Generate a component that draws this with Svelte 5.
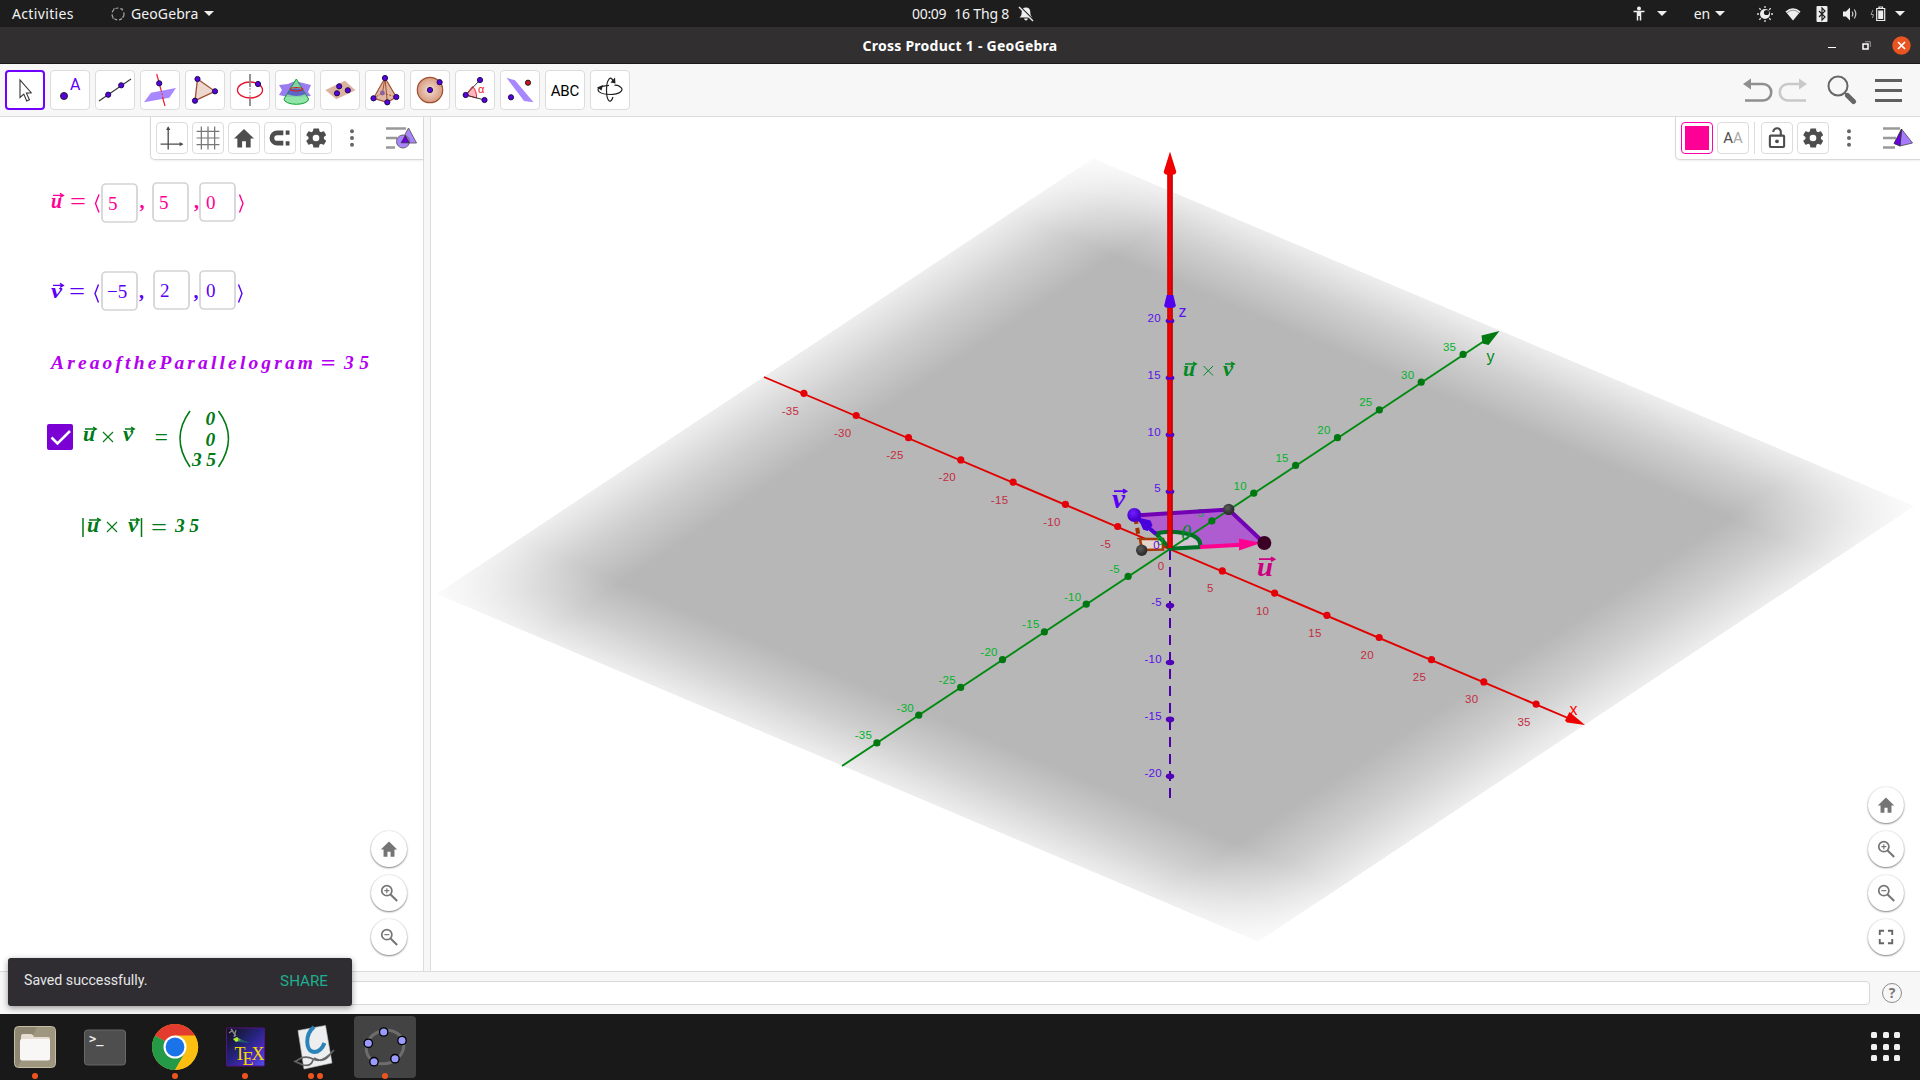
<script>
  // Screen projection of the 3D axes: origin and step for five units.
  const O = { x: 1170, y: 548.7 };
  const project = (x, y, z = 0) => ({
    x: O.x + (x * 52.3 + y * 41.87) / 5,
    y: O.y + (x * 22.2 - y * 27.75 - z * 56.9) / 5
  });
  const steps = [-35, -30, -25, -20, -15, -10, -5, 5, 10, 15, 20, 25, 30, 35];
  const zSteps = [-20, -15, -10, -5, 5, 10, 15, 20];
  const xTicks = steps.map((n) => ({ n, ...project(n, 0) }));
  const yTicks = steps.map((n) => ({ n, ...project(0, n) }));
  const zTicks = zSteps.map((n) => ({ n, ...project(0, 0, n) }));

  const tools = ['move', 'point', 'line', 'perp', 'polygon', 'circle', 'cone', 'plane', 'pyramid', 'sphere', 'angle', 'reflect', 'text', 'rotate'];
  const leftBar = ['axes', 'grid', 'home', 'magnet', 'gear'];
  const leftZoom = ['home', 'zoomin', 'zoomout'];
  const rightZoom = ['home', 'zoomin', 'zoomout', 'full'];
  const dock = [
    { id: 'files', dots: 1 },
    { id: 'terminal', dots: 0 },
    { id: 'chrome', dots: 1 },
    { id: 'tex', dots: 1 },
    { id: 'viewer', dots: 2 },
    { id: 'geogebra', dots: 1 }
  ];
  const fields = [
    { x: 101, y: 183, tx: 108, v: '5', c: 'pink' },
    { x: 152, y: 182, tx: 159, v: '5', c: 'pink' },
    { x: 199, y: 182, tx: 206, v: '0', c: 'pink' },
    { x: 101, y: 271, tx: 107, v: '−5', c: 'blue' },
    { x: 153, y: 270, tx: 160, v: '2', c: 'blue' },
    { x: 199, y: 270, tx: 206, v: '0', c: 'blue' }
  ];
</script>

{#snippet vec(x, y, ch, size, len)}
  <g>
    <text {x} {y} font-size={size} font-weight="bold" font-style="italic" textLength={len} lengthAdjust="spacingAndGlyphs">{ch}</text>
    <path d="M{x + 2} {y - size * 0.6}h{len - 1}m-3 -2l3.4 2l-3.4 2" fill="none" stroke="currentColor" stroke-width={size > 25 ? 1.8 : 1.3} />
  </g>
{/snippet}

{#snippet icon(id)}
  <svg class="ic" width="24" height="24" viewBox="0 0 24 24">
    {#if id === 'axes'}
      <g fill="none" stroke="#4d4d4d" stroke-width="1.4"><path d="M8 24V1M0 18.5H23" /></g>
      <path d="M8 -.5l2.3 4H5.700zM24 18.500l-4-2.300v4.600z" fill="#4d4d4d" />
    {:else if id === 'grid'}
      <path d="M5 0v24M12 0v24M19 0v24M0 5h24M0 12h24M0 19h24" stroke="#777" stroke-width="1.3" />
    {:else if id === 'home'}
      <path d="M12 2.500L1.500 12.500H5V22h5v-6.500h4V22h5v-9.500h3.500z" fill="currentColor" />
    {:else if id === 'magnet'}
      <path d="M15.500 6.500H9a5.500 5.500 0 0 0 0 11h6.500" fill="none" stroke="#4d4d4d" stroke-width="5" />
      <path d="M18 4h4v4.500h-4zM18 15.500h4V20h-4z" fill="#4d4d4d" />
    {:else if id === 'gear'}
      <path fill="#4d4d4d" fill-rule="evenodd" d="M20.300 13l.1-1-.1-1 2.100-1.700a.6.6 0 0 0 .1-.7l-2-3.500a.6.6 0 0 0-.7-.2l-2.500 1a8 8 0 0 0-1.700-1l-.4-2.700A.5.5 0 0 0 14.700 2h-5a.5.5 0 0 0-.5.400l-.4 2.500q-1 .4-1.700 1l-2.500-1a.6.6 0 0 0-.7.200l-2 3.500a.5.5 0 0 0 .1.700L4.100 11 4 12l.1 1L2 14.700a.6.6 0 0 0-.1.700l2 3.500q.3.400.7.200l2.500-1q.800.6 1.700 1l.4 2.600q.1.400.5.400h5q.4 0 .5-.4l.4-2.600q.900-.4 1.700-1l2.500 1q.4.200.7-.2l2-3.500a.6.6 0 0 0-.1-.7zM12 15.500a3.500 3.500 0 1 1 0-7 3.500 3.500 0 0 1 0 7z" />
    {:else if id === 'dots'}
      <g fill="#666"><circle cx="12" cy="5" r="2.100" /><circle cx="12" cy="12" r="2.100" /><circle cx="12" cy="19" r="2.100" /></g>
    {:else if id === 'zoomin' || id === 'zoomout'}
      <g fill="none" stroke="#757575">
        <circle cx="9.200" cy="9" r="6.500" stroke-width="2.200" />
        <path d="M14 14l8.500 8.300" stroke-width="2.600" />
        <path d={id === 'zoomin' ? 'M6 9h6.400M9.200 5.800v6.400' : 'M6 9h6.400'} stroke-width="1.500" />
      </g>
    {:else if id === 'full'}
      <path d="M4 9.500V4h5.500M14.500 4H20v5.500M20 14.500V20h-5.500M9.500 20H4v-5.500" fill="none" stroke="#666" stroke-width="2.400" />
    {:else if id === 'lock'}
      <g fill="none" stroke="#4d4d4d" stroke-width="2.200"><rect x="4.500" y="9.500" width="15" height="12" rx="1" /><path d="M8 5.500a4 4 0 0 1 8 .5v3" /></g>
      <circle cx="12" cy="15.500" r="2" fill="#4d4d4d" />
    {/if}
  </svg>
{/snippet}

{#snippet dot(x, y)}
  <circle cx={x} cy={y} r="2.600" fill="#5a00e0" stroke="#1a1050" stroke-width="1" />
{/snippet}

{#snippet tool(id)}
  <svg class="toolicon" width="40" height="40" viewBox="0 0 40 40">
    {#if id === 'move'}
      <path d="M15 10v17.500l3.800-3.400 2.900 6.900 2.700-1.200-3-6.700 4.800-.4z" fill="#fff" stroke="#333" stroke-width="1.100" />
    {:else if id === 'point'}
      <circle cx="14" cy="26" r="3.500" fill="#5a00e0" stroke="#222" />
      <text x="20" y="20" class="ta">A</text>
    {:else if id === 'line'}
      <path d="M4 31L36 9" stroke="#333" stroke-width="1.100" />{@render dot(13.2, 24.700)}{@render dot(26.2, 15.300)}
    {:else if id === 'perp'}
      <path d="M4 32.300L11 22.700 36 18 29.400 27.700z" fill="#a888ff" />
      <path d="M16.700 4L21 20M22.500 27L25 36" stroke="#f02030" stroke-width="1.200" /><path d="M21 20L23 28" stroke="#f02030" stroke-dasharray="2 1.500" />{@render dot(19.2, 13.300)}
    {:else if id === 'polygon'}
      <path d="M12.500 9L30 21.300 10 30.700z" fill="#ecd8cf" stroke="#a05030" stroke-width="1.300" />{@render dot(12.5, 9)}{@render dot(30, 21.300)}{@render dot(10, 30.700)}
    {:else if id === 'circle'}
      <ellipse cx="20" cy="20" rx="12.500" ry="8" fill="none" stroke="#e8102a" stroke-width="1.300" />
      <path d="M20 4v13M20 29v7" stroke="#888" stroke-width="1.800" /><path d="M20 18v10" stroke="#888" stroke-dasharray="2 1.500" />{@render dot(28, 14)}
    {:else if id === 'cone'}
      <path d="M4 15l9-1 7-3 8 2 8 2-3 7 3 4-11 1-12 0-9-2 3-5z" fill="#9b7cf0" />
      <path d="M21.300 9L9 29a12.300 5.300 0 0 0 24.600 0z" fill="#7fe09a" fill-opacity=".85" stroke="#10a030" />
      <path d="M15 19.500Q21 17 27.500 19.500L30.500 24q-9 4-18.500 0z" fill="#5040d0" fill-opacity=".75" />
      <path d="M15 19a6.500 2.200 0 0 0 12.800 0a6.500 1.800 0 0 0-12.800 0" fill="none" stroke="#d02020" stroke-width="1.200" />
    {:else if id === 'plane'}
      <path d="M5.300 20L25 10.700 35.500 20.300 16.300 29.300z" fill="#dcb39f" />{@render dot(19.2, 16.300)}{@render dot(27.8, 20.300)}{@render dot(17, 23.300)}
    {:else if id === 'pyramid'}
      <path d="M20 8L8.500 28.300 22.300 32.300 31.300 27z" fill="#e2b7a2" stroke="#a05030" stroke-width="1.200" />
      <path d="M20 8L22.300 32.300M20 8L17.400 23" stroke="#a05030" /><path d="M8.500 28.300L17.400 23 31.300 27" fill="none" stroke="#a05030" stroke-dasharray="2 1.500" />
      <circle cx="17.400" cy="23" r="2.400" fill="#8a60a0" />{@render dot(20, 8)}{@render dot(8.5, 28.300)}{@render dot(22.3, 32.300)}{@render dot(31.3, 27)}
    {:else if id === 'sphere'}
      <circle cx="20" cy="20" r="12.700" fill="url(#ball)" stroke="#a05030" stroke-width="1.200" />{@render dot(20, 20)}{@render dot(29.600, 12.200)}
    {:else if id === 'angle'}
      <path d="M10.700 25L17.500 16.500Q22 21 21.500 28z" fill="#ffb5bd" stroke="#f02030" />
      <path d="M25 10L10.700 25 29.500 30" fill="none" stroke="#333" />{@render dot(25, 10)}{@render dot(10.700, 25)}{@render dot(29.500, 30)}
      <text x="23" y="23" class="alpha">α</text>
    {:else if id === 'reflect'}
      <path d="M6.500 7.700L15 10.300 33.500 32.300 24 31z" fill="#a888ff" /><circle cx="28" cy="12.700" r="2.600" fill="#d01020" stroke="#222" />{@render dot(11, 27.300)}
    {:else if id === 'text'}
      <text x="5.700" y="25.500" class="abc" textLength="28.600">ABC</text>
    {:else}
      <g fill="none" stroke="#222" stroke-width="1.200">
        <path d="M9 17.500C6 20.500 10 24.500 20 24.500S34 20 31 17.500C29 15.700 26 15 24.500 15.300M19 15.300l-7 1" />
        <path d="M23 11C21 5 16.500 9 16.500 20S20.500 35 23 27" />
      </g>
      <path d="M7 17.500l6-2.500-1.500 5.500zM20.500 12.500l4.500-5 .5 6z" fill="#222" />
    {/if}
  </svg>
{/snippet}

<div class="screen">
  <header class="topbar">
    <span class="activities">Activities</span>
    <svg width="16" height="16" viewBox="0 0 16 16"><circle cx="8" cy="8" r="6" fill="none" stroke="#aaa" stroke-width="1.200" stroke-dasharray="3 2" /><path d="M3 3h2M11 3h2M13 10v2M3 11v2" stroke="#999" /></svg>
    <span class="appname">GeoGebra</span>
    <i class="caret"></i>
    <div class="clock">
      <span>00:09</span><span>16 Thg 8</span>
      <svg width="16" height="16" viewBox="0 0 16 16"><path d="M8 1.500c-3 0-4.300 2-4.300 4.500 0 3-.7 4.200-2.200 5.500h13C13 10.200 12.300 9 12.300 6 12.300 3.500 11 1.500 8 1.500zM6 12.500h4Q9.500 14.500 8 14.500T6 12.500" fill="#eee" /><path d="M1.700 .3l14 14" stroke="#1d1d1d" stroke-width="1.500" /><path d="M1 1l14 14" stroke="#eee" stroke-width="1.400" /></svg>
    </div>
    <div class="tray">
      <svg width="12" height="16" viewBox="0 0 12 16"><circle cx="6" cy="2.500" r="2" fill="#eee" /><path d="M.5 5.500h11M6 5v5M4.500 5v9.500M7.500 5v9.500" stroke="#eee" stroke-width="1.500" fill="none" /></svg>
      <i class="caret c1"></i>
      <span class="lang">en</span>
      <i class="caret c2"></i>
      <svg class="sun" width="16" height="16" viewBox="0 0 16 16"><path d="M8 0v2M8 14v2M0 8h2M14 8h2M2.300 2.300l1.500 1.500M12.200 12.200l1.500 1.500M2.300 13.700l1.500-1.500M12.200 3.800l1.500-1.500" stroke="#ddd" stroke-width="1.300" /><circle cx="8" cy="8" r="5" fill="#eee" /><circle cx="9.500" cy="6.500" r="2.600" fill="#1d1d1d" /></svg>
      <svg class="wifi" width="16" height="14" viewBox="0 0 16 14"><path d="M.5 4.500Q8-2 15.500 4.500L8 13.500z" fill="#eee" /><path d="M2 5.800Q8 .5 14 5.800" fill="none" stroke="#555" stroke-width=".6" /></svg>
      <svg class="bt" width="12" height="16" viewBox="0 0 12 16"><rect x=".5" width="11" height="16" rx="1" fill="#eee" /><path d="M3 5l6 6-3 3V2l3 3-6 6" fill="none" stroke="#222" stroke-width="1.200" /></svg>
      <svg class="vol" width="16" height="14" viewBox="0 0 16 14"><path d="M1 4.500h3l4-4v13l-4-4H1z" fill="#eee" /><path d="M10 4.500q1.700 2.500 0 5M12.300 2.500q3 4.500 0 9" fill="none" stroke="#ccc" stroke-width="1.200" /></svg>
      <svg class="bat" width="16" height="16" viewBox="0 0 16 16"><path d="M3 4L1 8.500h2.500L2.500 12" fill="none" stroke="#999" /><path d="M6.700 2.500h8v12h-8zM9 2V1h3.500v1" fill="none" stroke="#eee" stroke-width="1.200" /><path d="M8.200 4.500h5V13h-5z" fill="#eee" /></svg>
      <i class="caret"></i>
    </div>
  </header>

  <div class="titlebar">
    <b>Cross Product 1 - GeoGebra</b>
    <div class="winbtns">
      <i class="min"></i>
      <svg width="9" height="9" viewBox="0 0 9 9"><rect x="1" y="3" width="5" height="5" fill="none" stroke="#fff" stroke-width="1.500" /><path d="M3 .7h5.300V6" fill="none" stroke="#999" /></svg>
      <svg width="19" height="19" viewBox="0 0 19 19"><circle cx="9.500" cy="9.500" r="9.200" fill="#e95420" /><path d="M6 6l7 7M13 6l-7 7" stroke="#fff" stroke-width="1.700" /></svg>
    </div>
  </div>

  <div class="toolbar">
    {#each tools as id, i}
      <div class="tool" class:active={i === 0}>{@render tool(id)}</div>
    {/each}
    <div class="tright">
      <svg width="64" height="28" viewBox="0 0 64 28">
        <path d="M7 8h13a8 8 0 0 1 0 16.500H2" fill="none" stroke="#8f8f8f" stroke-width="2.600" /><path d="M0 8l8-5.500v11z" fill="#8f8f8f" />
        <path d="M57 8H45a8 8 0 0 0 0 16.500h18" fill="none" stroke="#c9c9c9" stroke-width="2.600" /><path d="M64 8l-8-5.500v11z" fill="#c9c9c9" />
      </svg>
      <svg class="find" width="30" height="30" viewBox="0 0 30 30"><circle cx="11" cy="11" r="9.500" fill="none" stroke="#666" stroke-width="2" /><path d="M18 18l3 3" stroke="#666" stroke-width="2" /><path d="M20.500 20.500l6 6" stroke="#666" stroke-width="5" stroke-linecap="round" /></svg>
      <div class="burger"><i></i><i></i><i></i></div>
    </div>
  </div>

  <main class="work">
    <section class="left">
      <svg class="canvas math" width="423" height="854" viewBox="0 117 423 854">
        <g class="pink">
          {@render vec(51, 208, 'u', 21, 11)}
          <text x="70" y="210" font-size="25" textLength="16" lengthAdjust="spacingAndGlyphs">=</text>
          <path d="M99 194.500L95.500 203.500 99 212.500M239.500 194.500L243 203.500 239.500 212.500" fill="none" stroke="currentColor" stroke-width="1.400" />
          <text x="139.500" y="208" font-size="20" font-weight="bold">,</text><text x="194" y="208" font-size="20" font-weight="bold">,</text>
        </g>
        <g class="blue">
          {@render vec(51, 298, 'v', 21, 11)}
          <text x="69" y="300" font-size="25" textLength="16" lengthAdjust="spacingAndGlyphs">=</text>
          <path d="M98.500 284.500L95 293.500 98.500 302.500M238.500 284.500L242 293.500 238.500 302.500" fill="none" stroke="currentColor" stroke-width="1.400" />
          <text x="139" y="298" font-size="20" font-weight="bold">,</text><text x="193.500" y="298" font-size="20" font-weight="bold">,</text>
        </g>
        {#each fields as f}
          <rect x={f.x + 1} y={f.y + 1} width="35" height="38" rx="4" fill="#fff" stroke="#d3d3d8" stroke-width="1.700" />
          <text class={f.c} x={f.tx} y={f.y + 27} font-size="19">{f.v}</text>
        {/each}
        <g class="violet" font-weight="bold" font-style="italic" font-size="19.500">
          <text x="51" y="369" textLength="262">AreaoftheParallelogram</text>
          <text x="320.500" y="370" font-size="22" textLength="15" lengthAdjust="spacingAndGlyphs">=</text>
          <text x="344" y="369" textLength="25">35</text>
        </g>
        <rect x="47" y="424" width="26" height="26" rx="2" fill="#7b00d4" />
        <path d="M51.500 437.500l6 6 12.500-12.500" fill="none" stroke="#fff" stroke-width="2.600" />
        <g class="green">
          {@render vec(83, 441, 'u', 20, 12)}
          <path d="M103 432l10 10M113 432l-10 10" stroke="currentColor" stroke-width="1.100" />
          {@render vec(123, 441, 'v', 20, 10)}
          <text x="153" y="445" font-size="24" font-style="italic" textLength="16" lengthAdjust="spacingAndGlyphs">=</text>
          <path d="M190 411q-20 27 0 56M218.500 411q20 27 0 56" fill="none" stroke="currentColor" stroke-width="1.600" />
          <g font-style="italic" font-weight="bold" font-size="19.500"><text x="205.500" y="425">0</text><text x="205.500" y="445.500">0</text><text x="192" y="466" textLength="24">35</text></g>
          <path d="M83 518v19M141.500 518v19" stroke="currentColor" stroke-width="1.500" />
          {@render vec(87, 532, 'u', 20, 12)}
          <path d="M107 522l10 10M117 522l-10 10" stroke="currentColor" stroke-width="1.100" />
          {@render vec(128, 532, 'v', 20, 10)}
          <text x="151" y="535" font-size="24" textLength="16" lengthAdjust="spacingAndGlyphs">=</text>
          <text x="175" y="532" font-size="19.500" font-style="italic" font-weight="bold" textLength="24">35</text>
        </g>
      </svg>
      <div class="stylebar lbar">
        {#each leftBar as id}<div class="sbtn">{@render icon(id)}</div>{/each}
        <div class="more">{@render icon('dots')}</div>
        <svg class="viewicon" width="32" height="24" viewBox="0 0 32 24"><path d="M0 2.500h20M0 12h11M0 21.500h9" stroke="#999" stroke-width="2.400" /><path d="M22.500 2L30.500 17H14.500z" fill="#a885ff" stroke="#666" /><circle cx="17" cy="15.500" r="6.500" fill="#a885ff" stroke="#666" /><path d="M19.300 9.500l4 7.300h-8.300q2-3 4.300-7.300z" fill="#6a00e0" stroke="#333" stroke-width=".8" /></svg>
      </div>
      <div class="zooms">{#each leftZoom as id}<div class="round">{@render icon(id)}</div>{/each}</div>
    </section>
    <div class="split"></div>
    <section class="right">
      <svg class="canvas" width="1489" height="854" viewBox="431 117 1489 854">
        <defs>
          <radialGradient id="ball"><stop offset="0" stop-color="#f3ddd2" /><stop offset="1" stop-color="#d59b80" /></radialGradient>
          <linearGradient id="fu"><stop offset="0" stop-color="#fff" stop-opacity=".24" /><stop offset=".065" stop-color="#fff" stop-opacity=".68" /><stop offset=".125" stop-color="#fff" /><stop offset=".875" stop-color="#fff" /><stop offset=".935" stop-color="#fff" stop-opacity=".68" /><stop offset="1" stop-color="#fff" stop-opacity=".24" /></linearGradient>
          <linearGradient id="fv" x2="0" y2="1"><stop offset="0" stop-color="#b7b7b7" stop-opacity=".24" /><stop offset=".065" stop-color="#b7b7b7" stop-opacity=".68" /><stop offset=".125" stop-color="#b7b7b7" /><stop offset=".875" stop-color="#b7b7b7" /><stop offset=".935" stop-color="#b7b7b7" stop-opacity=".68" /><stop offset="1" stop-color="#b7b7b7" stop-opacity=".24" /></linearGradient>
          <mask id="mu" maskUnits="userSpaceOnUse" x="0" y="0" width="100" height="100"><rect width="100" height="100" fill="url(#fu)" /></mask>
          <linearGradient id="shaft"><stop offset="0" stop-color="#b80000" /><stop offset=".3" stop-color="#f00000" /><stop offset=".65" stop-color="#f00000" /><stop offset="1" stop-color="#a00000" /></linearGradient>
          <radialGradient id="pv" cx=".4" cy=".35"><stop offset="0" stop-color="#7020ff" /><stop offset="1" stop-color="#4a00d0" /></radialGradient>
          <radialGradient id="pd" cx=".4" cy=".35"><stop offset="0" stop-color="#5c5c5c" /><stop offset="1" stop-color="#303030" /></radialGradient>
        </defs>
        <g transform="matrix(8.22 3.48 6.57 -4.36 436 594)"><rect width="100" height="100" fill="url(#fv)" mask="url(#mu)" /></g>

        <path d="M1134.500 515.500L1228.700 509.500 1264.200 543 1170 548.700z" fill="#ae5ccf" />
        <path d="M1156 533.500Q1170 530 1186 533.500T1199 547L1170 548.700z" fill="#d2c4d2" />
        <!-- Axes -->
        <path d="M764 377L1575 721" stroke="#e00000" stroke-width="1.900" />
        <path d="M842 766L1488 338.500" stroke="#008a10" stroke-width="1.900" />
        <path d="M1585 725l-15.500-13-4.500 8.500 2 2z" fill="#ee0000" />
        <path d="M1499.500 331l-18 4.500 1 8 6 1.500z" fill="#007a10" />
        <path d="M1170 550V798" stroke="#4b00a8" stroke-width="2" stroke-dasharray="10 7" />
        {#each xTicks as t}<circle cx={t.x} cy={t.y} r="3.600" fill="#e40008" /><text class="lab xl" x={t.x - (t.n > -10 ? 12 : 13.5)} y={t.y + 21.500}>{t.n}</text>{/each}
        {#each yTicks as t}<circle cx={t.x} cy={t.y} r="3.600" fill="#007812" /><text class="lab yl" x={t.x - (t.n === 5 ? 11 : 13.5)} y={t.y - 3.700}>{t.n}</text>{/each}
        {#each zTicks as t}<ellipse cx={t.x} cy={t.y} rx="4.200" ry="2.800" fill="#5200b8" /><text class="lab zl" x={t.x - (t.n < 0 ? 8 : 9)} y={t.y + 0.600}>{t.n}</text>{/each}

        <!-- Parallelogram edges and arrows -->
        <path d="M1134.500 515.500L1228.700 509.500 1264.200 543" fill="none" stroke="#7200b4" stroke-width="4" />
        <path d="M1135.500 518l3.500 21" stroke="#a03000" stroke-width="4" stroke-dasharray="6 4" fill="none" />
        <path d="M1140 539L1163 539 1163 549.500 1142 550z" fill="#e5d4cb" stroke="#a83a08" stroke-width="2.600" />
        <path d="M1170 548.700L1156 533.500Q1170 530 1186 533.500T1200 547z" fill="none" stroke="#007024" stroke-width="4" />
        <path d="M1134.500 515.500L1156 534" stroke="#4b00d0" stroke-width="4" />
        <path d="M1138 517.500l12.500 3 2 5-5 5.500-4.500-1.500z" fill="#4800dc" />
        <path d="M1200 547L1246 544.500" stroke="#ff0090" stroke-width="4" />
        <path d="M1261 543l-22-4.500v12z" fill="#ff0090" />
        <circle cx="1134.300" cy="515" r="7" fill="url(#pv)" />
        <circle cx="1228.700" cy="509.500" r="5.700" fill="url(#pd)" />
        <circle cx="1141.700" cy="550.300" r="5.700" fill="url(#pd)" />
        <circle cx="1264.300" cy="543" r="7" fill="#3c0024" />
        <rect x="1167.200" y="170" width="5.600" height="378" fill="url(#shaft)" />
        <path d="M1170 151.500l6.200 20q.5 3.500-6.200 3.500t-6.200-3.500z" fill="#f00000" />
        <path d="M1166.700 295h6.600l2.500 10.500q0 2.500-5.800 2.500t-5.800-2.500z" fill="#5400ee" />
        {#each zTicks.slice(4) as t}<path d="M{t.x - 3.800} {t.y - 1}q3.800 3.500 7.600 0" fill="none" stroke="#5200d0" stroke-width="2.400" />{/each}

        <text class="lab yl" x="1160" y="545">0</text>
        <text class="lab zl" x="1160" y="549">0</text>
        <text class="lab xl" x="1161" y="570">0</text>
        <text class="ax" x="1178.500" y="316.500" fill="#5a10f0">z</text>
        <text class="ax" x="1486.500" y="362" fill="#008a20">y</text>
        <text class="ax" x="1569.500" y="715" fill="#ff0000">x</text>
        <g class="math">
          <g class="leaf">
            {@render vec(1183, 376, 'u', 20, 12)}
            <path d="M1203.500 366l9.500 9.500M1213 366l-9.500 9.500" stroke="currentColor" stroke-width="1" />
            {@render vec(1223, 376, 'v', 20, 10)}
          </g>
          <g class="blue">{@render vec(1112, 508, 'v', 28, 13)}</g>
          <g class="magenta">{@render vec(1257, 576, 'u', 28, 16)}</g>
          <text class="leaf" x="1181" y="540" font-size="21" font-style="italic">θ</text>
        </g>
      </svg>
      <div class="stylebar rbar">
        <div class="sbtn colour"><i></i></div>
        <div class="sbtn aa"><span>A</span><span>A</span></div>
        <i class="sep"></i>
        <div class="sbtn">{@render icon('lock')}</div>
        <div class="sbtn">{@render icon('gear')}</div>
        <div class="more">{@render icon('dots')}</div>
        <svg class="viewicon" width="32" height="24" viewBox="0 0 32 24"><path d="M0 2.500h17M0 12h13M0 21.500h12" stroke="#999" stroke-width="2.400" /><path d="M18.500 3L29.500 17 17 20z" fill="#a57aff" stroke="#555" stroke-width=".9" /><path d="M18.500 3L11 17.500 17 20z" fill="#6a00e8" stroke="#333" stroke-width=".9" /></svg>
      </div>
      <div class="zooms">{#each rightZoom as id}<div class="round">{@render icon(id)}</div>{/each}</div>
    </section>
  </main>

  <div class="inputbar">
    <div class="field"></div>
    <div class="help">?</div>
    <div class="toast"><span>Saved successfully.</span><span class="share">SHARE</span></div>
  </div>

  <footer class="dock">
    {#each dock as d}
      <div class="app" class:current={d.id === 'geogebra'}>
        <svg width="62" height="62" viewBox="0 0 62 62">
          {#if d.id === 'files'}
            <rect x="6.500" y="10.500" width="41" height="41" rx="4" fill="#8f8672" stroke="#c4bda8" />
            <path d="M29 11h15q3 0 3 3v34q0 3-3 3H10z" fill="#aaa18b" opacity=".6" />
            <path d="M13 20q0-2 2-2h8q2 0 3 3h14q2 0 2 2v19q0 2-2 2H15q-2 0-2-2z" fill="#e5ddcf" />
            <rect x="12" y="23" width="30" height="21.500" rx="2" fill="#f8f7f5" />
          {:else if d.id === 'terminal'}
            <rect x="6.500" y="14" width="41" height="35" rx="3" fill="#4e4e4e" stroke="#686868" />
            <text x="11" y="27" class="prompt">&gt;_</text>
          {:else if d.id === 'chrome'}
            <circle cx="27" cy="31" r="23" fill="#fbbc05" />
            <path d="M27 31L7.100 19.500A23 23 0 0 1 46.900 19.500z" fill="#e33b2e" />
            <path d="M27 31L7.100 19.500A23 23 0 0 0 27 54L37 36.700z" fill="#249a48" />
            <path d="M27 19.500h20A23 23 0 0 1 27 54l10-17z" fill="#fcbe10" />
            <circle cx="27" cy="31" r="11.500" fill="#fff" /><circle cx="27" cy="31" r="9.400" fill="#1a73e8" />
          {:else if d.id === 'tex'}
            <defs><linearGradient id="tx" x2="1" y2="1"><stop offset="0" stop-color="#111" /><stop offset=".45" stop-color="#23237a" /><stop offset=".75" stop-color="#4b2bc0" /><stop offset="1" stop-color="#4a55e8" /></linearGradient></defs>
            <rect x="8.500" y="12" width="38" height="38" rx="1" fill="url(#tx)" stroke="#58108a" />
            <path d="M13 13l5 7M11 17l4-3M18 14l-2 7" stroke="#888" stroke-width="1.300" /><path d="M15 23l4-2 4 3-5 2z" fill="#b5ef35" /><path d="M20 22l12 5-12-1z" fill="#258060" opacity=".6" />
            <g class="tex"><text x="16.500" y="44">T</text><text x="24.500" y="49">E</text><text x="33.500" y="44">X</text></g>
          {:else if d.id === 'viewer'}
            <path d="M10 14.500L37.500 9.500 44 47 16 53z" fill="#eceef0" stroke="#bbb" stroke-width=".6" />
            <path d="M26 11C17 18 17 35 26 36Q33 36 36.500 27" fill="none" stroke="#2b83b8" stroke-width="4" />
            <path d="M7 46Q16 38 25 43T46 34M6 45l9 4q8 2 10-5M26 42q8 5 14-1l4-5" fill="none" stroke="#666" stroke-width="1.700" />
          {:else}
            <ellipse cx="31" cy="31" rx="19" ry="16.500" fill="none" stroke="#6d6d6d" stroke-width="3" transform="rotate(-20 31 31)" />
            {#each [[29.7, 16], [48, 24.500], [14.300, 27.300], [41, 42.700], [20, 45.700]] as [x, y]}<circle cx={x} cy={y} r="4.200" fill="#9a9aff" stroke="#000" stroke-width="1.300" />{/each}
          {/if}
        </svg>
        <div class="dots">{#each Array(d.dots) as _}<i></i>{/each}</div>
      </div>
    {/each}
    <div class="grid9">{#each Array(9) as _}<i></i>{/each}</div>
  </footer>
</div>

<style>
  :global(body) { margin: 0; overflow: hidden; }
  .screen { width: 1920px; height: 1080px; display: flex; flex-direction: column; background: #fff; font-family: "Noto Sans", sans-serif; }
  .screen > :global(*) { flex: none; }
  svg { display: block; flex: none; }
  .screen, .screen div, .screen header, .screen footer { box-sizing: border-box; }

  .topbar { height: 27px; background: #1d1d1d; color: #f2f2f2; display: flex; align-items: center; padding: 0 14px 0 12px; font-size: 14px; position: relative; }
  .activities { width: 98px; letter-spacing: .35px; }
  .appname { margin-left: 5px; width: 68px; letter-spacing: .1px; }
  .caret { border: 5px solid transparent; border-top-color: #eee; border-bottom: 0; flex: none; margin-left: 5px; }
  .clock { position: absolute; left: 912px; display: flex; align-items: center; gap: 8px; letter-spacing: -.3px; }
  .clock span + span { letter-spacing: -.2px; }
  .clock svg { margin-left: 1px; }
  .tray { margin-left: auto; display: flex; align-items: center; }
  .c1 { margin-left: 12px; }
  .lang { margin-left: 27px; letter-spacing: -.2px; }
  .sun { margin-left: 32px; } .wifi { margin-left: 12px; } .bt { margin-left: 15px; } .vol { margin-left: 14px; } .bat { margin-left: 12px; }
  .tray .bat + .caret { margin-left: 9px; margin-right: 1px; }

  .titlebar { height: 37px; background: #322f30; border-bottom: 1px solid #1a1819; color: #fff; display: flex; align-items: center; justify-content: center; position: relative; font-size: 14px; }
  .titlebar b { letter-spacing: .25px; }
  .winbtns { position: absolute; right: 9px; display: flex; align-items: center; gap: 21px; }
  .winbtns .min { width: 8px; height: 1px; background: #fff; margin: 5px 5px 0 0; }

  .toolbar { height: 53px; background: #f7f7f7; border-bottom: 1px solid #dcdcdc; display: flex; align-items: center; gap: 5px; padding: 0 18px 0 5px; }
  .tool { width: 40px; height: 40px; border: 1px solid #dcdcdc; border-radius: 4px; background: #fff; }
  .toolicon { margin: -1px; }
  .tool.active { border: 2px solid #7000ff; }
  .active .toolicon { margin: -2px; }
  .ta { font: 16px Roboto, sans-serif; fill: #6000f0; }
  .abc { font: 15px Roboto, sans-serif; fill: #000; }
  .alpha { font: 11px "Liberation Sans", sans-serif; fill: #f02030; }
  .tright { margin-left: auto; display: flex; align-items: center; }
  .find { margin-left: 20px; }
  .burger { margin-left: 18px; width: 27px; display: flex; flex-direction: column; gap: 7px; }
  .burger i { height: 3px; background: #5f5f5f; }

  .work { height: 854px; display: flex; }
  .left { width: 423px; position: relative; }
  .split { width: 8px; background: #f7f7f7; border: 1px solid #dcdcdc; border-width: 0 1px; }
  .right { width: 1489px; position: relative; }
  .math { font-family: "Liberation Serif", serif; }
  .math text { fill: currentColor; }
  .pink { color: #ff0096; fill: #ff0096; }
  .blue { color: #5c00f5; fill: #5c00f5; }
  .violet { color: #b400f0; }
  .green { color: #007a14; }
  .leaf { color: #008a24; }
  .magenta { color: #cc0080; }
  .lab { font: 11.500px "Liberation Sans", sans-serif; letter-spacing: .3px; text-anchor: middle; }
  .xl { fill: #c42c40; } .yl { fill: #00b428; } .zl { fill: #5a10e8; text-anchor: end; }
  .ax { font: 16px "Liberation Sans", sans-serif; }

  .stylebar { position: absolute; top: 0; right: 0; height: 43px; background: #fff; border: 1px solid #d8d8d8; border-width: 0 0 1px 1px; border-radius: 0 0 0 5px; box-shadow: 0 1px 2px #0001; display: flex; align-items: center; gap: 4px; }
  .lbar { width: 273px; padding-left: 5px; }
  .rbar { width: 245px; padding-left: 5px; }
  .sbtn { width: 32px; height: 32px; border: 1px solid #dcdcdc; border-radius: 4px; display: flex; align-items: center; justify-content: center; color: #4d4d4d; flex: none; }
  .colour { border-color: #f0a; }
  .colour i { width: 24px; height: 24px; background: #ff0096; }
  .aa { font: 15px Roboto, sans-serif; }
  .aa span + span { color: #aaa; }
  .sep { width: 1px; height: 32px; background: #dcdcdc; margin: 0 2px 0 1px; }
  .more { width: 32px; display: flex; justify-content: center; flex: none; }
  .viewicon { margin-left: 14px; }
  .ic { overflow: visible; }
  .rbar .ic, .lbar .ic { transform: scale(.95); }
  .zooms { position: absolute; right: 16px; bottom: 16px; display: flex; flex-direction: column; gap: 8px; }
  .round { width: 36px; height: 36px; border-radius: 50%; background: #fff; box-shadow: 0 1px 2px #0007, 0 0 2px #0002; display: flex; align-items: center; justify-content: center; color: #757575; }
  .round .ic { transform: scale(.78); }

  .inputbar { height: 43px; background: #f7f7f7; border-top: 1px solid #dcdcdc; display: flex; align-items: center; padding: 0 18px 0 10px; position: relative; }
  .field { flex: 1; height: 24px; background: #fff; border: 1px solid #d8d8d8; border-radius: 4px; margin-right: 12px; }
  .help { width: 20px; height: 20px; border: 1.500px solid #8c8c8c; border-radius: 50%; color: #777; font: bold 14px/17px "Open Sans", sans-serif; text-align: center; }
  .toast { position: absolute; left: 8px; bottom: 8px; width: 344px; height: 48px; border-radius: 3px; background: #2f2d32; box-shadow: 0 2px 6px #0006; display: flex; justify-content: space-between; padding: 14px 24px 0 16px; color: #e6e6e6; font: 14.200px/16px Roboto, sans-serif; }
  .share { color: #1fae90; font-size: 15.200px; line-height: 19px; }

  .dock { height: 66px; background: #191919; display: flex; align-items: flex-start; gap: 8px; padding: 2px 20px 0 8px; }
  .app { width: 62px; height: 62px; position: relative; flex: none; border-radius: 4px; }
  .app.current { background: #434343; margin-left: -4px; }
  .dots { position: absolute; left: 0; right: 8px; bottom: -1px; display: flex; justify-content: center; gap: 3px; }
  .current .dots { right: 0; }
  .dots i { width: 6px; height: 6px; border-radius: 50%; background: #ee5420; }
  .prompt { font: bold 12px "DejaVu Sans Mono", monospace; fill: #eee; }
  .tex { font: 18px "Liberation Serif", serif; fill: #f5d800; }
  .grid9 { margin: 16px 0 0 auto; display: grid; grid-template-columns: repeat(3, 6px); gap: 5.500px; }
  .grid9 i { width: 6px; height: 6px; border-radius: 1.500px; background: #f0f0f0; }
</style>
